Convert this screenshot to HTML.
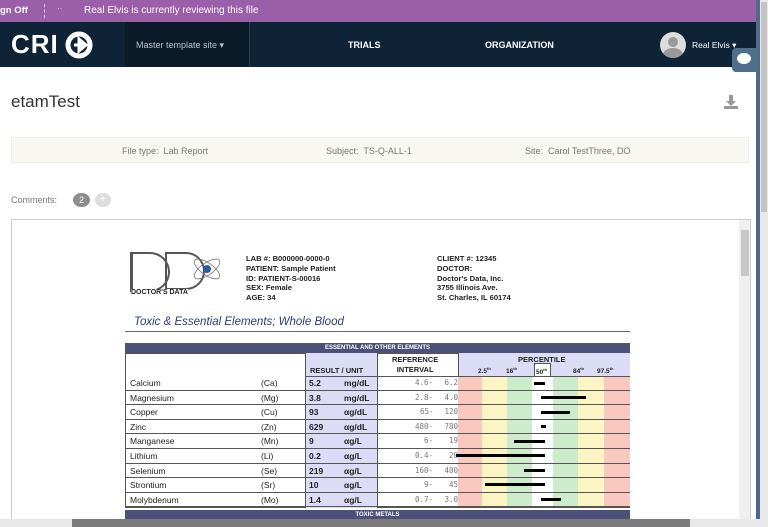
<!DOCTYPE html>
<html><head><meta charset="utf-8"><style>
*{margin:0;padding:0;box-sizing:border-box}
body{width:768px;height:527px;overflow:hidden;background:#fff;font-family:"Liberation Sans",sans-serif;position:relative}
.a{position:absolute}
.t{font-family:"Liberation Sans",sans-serif}
.m{font-family:"DejaVu Sans Mono","Liberation Mono",monospace}
.rw{position:absolute;left:125px;width:505px;height:14.6px;border-bottom:1px solid #555;font-size:8.5px;color:#222}
.rw span{position:absolute;top:2px}
.band{position:absolute;top:376px;height:131px}
.bar{position:absolute;height:3px;background:#000}
</style></head><body>
<!-- purple bar -->
<div class="a" style="left:0;top:0;width:756px;height:22px;background:#9b5ea9"></div>
<div class="a t" style="left:0;top:5px;font-size:9.5px;font-weight:bold;color:#fff">gn Off</div>
<div class="a" style="left:44px;top:4px;height:14px;border-left:1px dashed #e8d8ee"></div>
<div class="a" style="left:57px;top:4px;font-size:8px;color:#e8d8ee">··</div>
<div class="a t" style="left:84px;top:5px;font-size:10px;color:#fff">Real Elvis is currently reviewing this file</div>
<!-- nav -->
<div class="a" style="left:0;top:22px;width:756px;height:45px;background:#0e2336"></div>
<div class="a" style="left:125px;top:22px;width:125px;height:45px;background:#0a1a29;border-right:1px solid #2b3e50"></div>
<div class="a" style="left:11px;top:29px;font-size:26px;font-weight:900;color:#fff;letter-spacing:1px">CRI</div>
<svg class="a" style="left:65px;top:31px" width="30" height="28"><circle cx="14" cy="14" r="11" fill="none" stroke="#fff" stroke-width="5"/><path d="M9 14h8M14 8l7 6-7 6z" fill="#fff" stroke="#fff" stroke-width="3"/></svg>
<div class="a t" style="left:136px;top:40px;font-size:9px;color:#b9c3cd">Master template site &#9662;</div>
<div class="a t" style="left:348px;top:40px;font-size:9px;font-weight:bold;color:#fff">TRIALS</div>
<div class="a t" style="left:485px;top:40px;font-size:9px;font-weight:bold;color:#fff">ORGANIZATION</div>
<div class="a" style="left:660px;top:32px;width:26px;height:26px;border-radius:50%;background:#ddd;overflow:hidden"><div class="a" style="left:8px;top:5px;width:10px;height:10px;border-radius:50%;background:#999"></div><div class="a" style="left:3px;top:16px;width:20px;height:14px;border-radius:50%;background:#999"></div></div>
<div class="a t" style="left:692px;top:40px;font-size:8.5px;color:#fff">Real Elvis &#9662;</div>
<!-- right side -->
<div class="a" style="left:756px;top:0;width:4px;height:527px;background:#4d6b88"></div>
<div class="a" style="left:760px;top:0;width:8px;height:527px;background:#e9e9e9"></div>
<div class="a" style="left:761px;top:2px;width:6px;height:210px;background:#c4c4c4"></div>
<div class="a" style="left:732px;top:48px;width:26px;height:24px;background:#4f6e8c;border-radius:4px 0 0 4px"></div>
<div class="a" style="left:737px;top:53px;width:14px;height:11px;border-radius:50%;background:#fff"></div>
<!-- title -->
<div class="a t" style="left:11px;top:92px;font-size:17px;color:#333">etamTest</div>
<svg class="a" style="left:722px;top:94px" width="18" height="16"><path d="M7 1h4v6h3l-5 5-5-5h3z M2 12h14v3H2z" fill="#999"/></svg>
<div class="a" style="left:11px;top:137px;width:738px;height:26px;background:#f8f7f2;border:1px solid #efede5"></div>
<div class="a t" style="left:122px;top:146px;font-size:9px;color:#777">File type:&nbsp; Lab Report</div>
<div class="a t" style="left:326px;top:146px;font-size:9px;color:#777">Subject:&nbsp; TS-Q-ALL-1</div>
<div class="a t" style="left:525px;top:146px;font-size:9px;color:#777">Site:&nbsp; Carol TestThree, DO</div>
<div class="a t" style="left:11px;top:195px;font-size:9px;color:#777">Comments:</div>
<div class="a" style="left:73px;top:193px;width:17px;height:14px;border-radius:50%;background:#8d8d8d;color:#fff;font-size:9px;text-align:center;line-height:14px">2</div>
<div class="a" style="left:95px;top:193px;width:16px;height:14px;border-radius:50%;background:#ddd;color:#fff;font-size:11px;text-align:center;line-height:13px">+</div>
<!-- viewer -->
<div class="a" style="left:11px;top:219px;width:740px;height:302px;border:1px solid #ccc"></div>
<div class="a" style="left:739px;top:220px;width:11px;height:300px;background:#f0f0f0"></div>
<div class="a" style="left:741px;top:230px;width:8px;height:46px;background:#c8c8c8"></div>
<div class="a" style="left:0;top:519px;width:760px;height:8px;background:#e8e8e8"></div>
<div class="a" style="left:72px;top:519px;width:618px;height:8px;background:#7b7b7b"></div>
<!-- report header -->
<div class="a" style="left:130px;top:252px;width:40px;height:40px;border:2px solid #555;border-radius:0 20px 20px 0;border-left-width:3px"></div>
<div class="a" style="left:165px;top:252px;width:40px;height:38px;border:2px solid #555;border-radius:0 20px 20px 0"></div>
<svg class="a" style="left:190px;top:252px" width="34" height="34"><ellipse cx="17" cy="17" rx="15" ry="6" fill="none" stroke="#777" stroke-width="0.8" transform="rotate(35 17 17)"/><ellipse cx="17" cy="17" rx="15" ry="6" fill="none" stroke="#777" stroke-width="0.8" transform="rotate(-35 17 17)"/><circle cx="17" cy="17" r="4" fill="#2a5aa8"/></svg>
<div class="a" style="left:131px;top:289px;font-size:7px;font-weight:bold;color:#222;background:#fff">DOCTOR'S DATA</div>
<div class="a" style="left:246px;top:254px;font-size:7.6px;font-weight:bold;color:#222;line-height:9.8px">LAB #: B000000-0000-0<br>PATIENT: Sample Patient<br>ID: PATIENT-S-00016<br>SEX: Female<br>AGE: 34</div>
<div class="a" style="left:437px;top:254px;font-size:7.6px;font-weight:bold;color:#222;line-height:9.8px">CLIENT #: 12345<br>DOCTOR:<br>Doctor's Data, Inc.<br>3755 Illinois Ave.<br>St. Charles, IL 60174</div>
<div class="a" style="left:134px;top:316px;font-size:11.5px;font-style:italic;color:#2d3b7a">Toxic &amp; Essential Elements; Whole Blood</div>
<div class="a" style="left:125px;top:331px;width:505px;border-top:1px solid #666"></div>
<!-- table -->
<div class="a" style="left:125px;top:343px;width:505px;height:10px;background:#4c5179;color:#fff;font-size:6px;font-weight:bold;text-align:center;line-height:10px">ESSENTIAL AND OTHER ELEMENTS</div>
<div class="a" style="left:125px;top:353px;width:505px;height:155px;border:1px solid #555"></div>
<div class="a" style="left:305px;top:353px;width:73px;height:155px;background:#dcdcf7;border-left:1px solid #555;border-right:1px solid #555"></div>
<div class="a" style="left:458px;top:353px;width:172px;height:23px;background:#dcdcf7;border-left:1px solid #555"></div>
<div class="band" style="left:458px;width:24px;background:#f9c9c0"></div>
<div class="band" style="left:482px;width:25px;background:#fbf5c3"></div>
<div class="band" style="left:507px;width:25px;background:#cdeccb"></div>
<div class="band" style="left:532px;width:21px;background:#fff"></div>
<div class="band" style="left:553px;width:25px;background:#cdeccb"></div>
<div class="band" style="left:578px;width:26px;background:#fbf5c3"></div>
<div class="band" style="left:604px;width:26px;background:#f9c9c0"></div>
<div class="a" style="left:305px;top:376px;width:325px;border-top:1px solid #555"></div>
<div class="a" style="left:310px;top:366px;font-size:7.5px;font-weight:bold;color:#222">RESULT / UNIT</div>
<div class="a" style="left:392px;top:355px;font-size:7.5px;font-weight:bold;color:#222;text-align:center;line-height:10px">REFERENCE<br>INTERVAL</div>
<div class="a" style="left:518px;top:355px;font-size:7.5px;font-weight:bold;color:#222">PERCENTILE</div>
<div class="a" style="left:478px;top:366px;font-size:6.5px;font-weight:bold;color:#222">2.5<sup style="font-size:4px">th</sup></div>
<div class="a" style="left:506px;top:366px;font-size:6.5px;font-weight:bold;color:#222">16<sup style="font-size:4px">th</sup></div>
<div class="a" style="left:534px;top:363px;width:17px;height:13px;border:1px solid #555;border-bottom:none;background:#fff;font-size:6.5px;font-weight:bold;color:#222;padding:3px 0 0 1px">50<sup style="font-size:4px">th</sup></div>
<div class="a" style="left:573px;top:366px;font-size:6.5px;font-weight:bold;color:#222">84<sup style="font-size:4px">th</sup></div>
<div class="a" style="left:597px;top:366px;font-size:6.5px;font-weight:bold;color:#222">97.5<sup style="font-size:4px">th</sup></div>

<div class="rw" style="top:376px"><span style="left:5px">Calcium</span><span style="left:136px">(Ca)</span><span style="left:184px;font-weight:bold">5.2</span><span style="left:219px;font-weight:bold">mg/dL</span><span class="m" style="left:290px;color:#777;font-size:7.5px">4.6-</span><span class="m" style="left:313px;color:#777;font-size:7.5px;width:20px;text-align:right">6.2</span></div>
<div class="rw" style="top:390.6px"><span style="left:5px">Magnesium</span><span style="left:136px">(Mg)</span><span style="left:184px;font-weight:bold">3.8</span><span style="left:219px;font-weight:bold">mg/dL</span><span class="m" style="left:290px;color:#777;font-size:7.5px">2.8-</span><span class="m" style="left:313px;color:#777;font-size:7.5px;width:20px;text-align:right">4.0</span></div>
<div class="rw" style="top:405.2px"><span style="left:5px">Copper</span><span style="left:136px">(Cu)</span><span style="left:184px;font-weight:bold">93</span><span style="left:219px;font-weight:bold">&#945;g/dL</span><span class="m" style="left:295px;color:#777;font-size:7.5px">65-</span><span class="m" style="left:308px;color:#777;font-size:7.5px;width:25px;text-align:right">120</span></div>
<div class="rw" style="top:419.8px"><span style="left:5px">Zinc</span><span style="left:136px">(Zn)</span><span style="left:184px;font-weight:bold">629</span><span style="left:219px;font-weight:bold">&#945;g/dL</span><span class="m" style="left:290px;color:#777;font-size:7.5px">480-</span><span class="m" style="left:308px;color:#777;font-size:7.5px;width:25px;text-align:right">780</span></div>
<div class="rw" style="top:434.4px"><span style="left:5px">Manganese</span><span style="left:136px">(Mn)</span><span style="left:184px;font-weight:bold">9</span><span style="left:219px;font-weight:bold">&#945;g/L</span><span class="m" style="left:299px;color:#777;font-size:7.5px">6-</span><span class="m" style="left:308px;color:#777;font-size:7.5px;width:25px;text-align:right">19</span></div>
<div class="rw" style="top:449px"><span style="left:5px">Lithium</span><span style="left:136px">(Li)</span><span style="left:184px;font-weight:bold">0.2</span><span style="left:219px;font-weight:bold">&#945;g/L</span><span class="m" style="left:290px;color:#777;font-size:7.5px">0.4-</span><span class="m" style="left:308px;color:#777;font-size:7.5px;width:25px;text-align:right">20</span></div>
<div class="rw" style="top:463.6px"><span style="left:5px">Selenium</span><span style="left:136px">(Se)</span><span style="left:184px;font-weight:bold">219</span><span style="left:219px;font-weight:bold">&#945;g/L</span><span class="m" style="left:290px;color:#777;font-size:7.5px">160-</span><span class="m" style="left:308px;color:#777;font-size:7.5px;width:25px;text-align:right">400</span></div>
<div class="rw" style="top:478.2px"><span style="left:5px">Strontium</span><span style="left:136px">(Sr)</span><span style="left:184px;font-weight:bold">10</span><span style="left:219px;font-weight:bold">&#945;g/L</span><span class="m" style="left:299px;color:#777;font-size:7.5px">9-</span><span class="m" style="left:308px;color:#777;font-size:7.5px;width:25px;text-align:right">45</span></div>
<div class="rw" style="top:492.8px"><span style="left:5px">Molybdenum</span><span style="left:136px">(Mo)</span><span style="left:184px;font-weight:bold">1.4</span><span style="left:219px;font-weight:bold">&#945;g/L</span><span class="m" style="left:290px;color:#777;font-size:7.5px">0.7-</span><span class="m" style="left:313px;color:#777;font-size:7.5px;width:20px;text-align:right">3.0</span></div>
<!-- bars -->
<div class="bar" style="left:534px;top:382px;width:11px"></div>
<div class="bar" style="left:541px;top:396px;width:45px"></div>
<div class="bar" style="left:541px;top:411px;width:29px"></div>
<div class="bar" style="left:541px;top:425px;width:5px"></div>
<div class="bar" style="left:514px;top:440px;width:31px"></div>
<div class="bar" style="left:456px;top:454px;width:89px"></div>
<div class="bar" style="left:524px;top:469px;width:21px"></div>
<div class="bar" style="left:485px;top:483px;width:60px"></div>
<div class="bar" style="left:541px;top:498px;width:20px"></div>
<div class="a" style="left:125px;top:510px;width:505px;height:9px;background:#4c5179;color:#fff;font-size:6px;font-weight:bold;text-align:center;line-height:10px;overflow:hidden">TOXIC METALS</div>
</body></html>
